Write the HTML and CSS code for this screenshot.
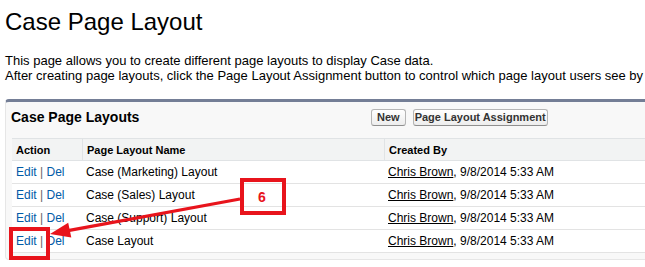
FILE: index.html
```html
<!DOCTYPE html>
<html>
<head>
<meta charset="utf-8">
<title>Case Page Layout</title>
<link rel="stylesheet" href="styles.css">
</head>
<body>
<div class="page">
  <h1 class="title">Case Page Layout</h1>
  <p class="desc">This page allows you to create different page layouts to display Case data.<br>After creating page layouts, click the Page Layout Assignment button to control which page layout users see by</p>
  <div class="panel">
    <div class="panel-head">
      <h2 class="panel-title">Case Page Layouts</h2>
      <div class="buttons">
        <button class="btn btn-new">New</button>
        <button class="btn btn-assign">Page Layout Assignment</button>
      </div>
    </div>
    <table class="list">
      <colgroup><col class="c-action"><col class="c-name"><col class="c-by"></colgroup>
      <thead>
        <tr><th class="first">Action</th><th>Page Layout Name</th><th>Created By</th></tr>
      </thead>
      <tbody>
        <tr><td><a class="act" href="#">Edit</a> <span class="sep">|</span> <a class="act" href="#">Del</a></td><td>Case (Marketing) Layout</td><td><a class="user" href="#">Chris Brown</a>, 9/8/2014 5:33 AM</td></tr>
        <tr><td><a class="act" href="#">Edit</a> <span class="sep">|</span> <a class="act" href="#">Del</a></td><td>Case (Sales) Layout</td><td><a class="user" href="#">Chris Brown</a>, 9/8/2014 5:33 AM</td></tr>
        <tr><td><a class="act" href="#">Edit</a> <span class="sep">|</span> <a class="act" href="#">Del</a></td><td>Case (Support) Layout</td><td><a class="user" href="#">Chris Brown</a>, 9/8/2014 5:33 AM</td></tr>
        <tr><td><a class="act" href="#">Edit</a> <span class="sep">|</span> <a class="act" href="#">Del</a></td><td>Case Layout</td><td><a class="user" href="#">Chris Brown</a>, 9/8/2014 5:33 AM</td></tr>
      </tbody>
    </table>
  </div>
</div>
<svg class="annot" width="645" height="267" viewBox="0 0 645 267" xmlns="http://www.w3.org/2000/svg">
  <line x1="240" y1="199" x2="68" y2="230.6" stroke="#e8141c" stroke-width="3.2"/>
  <polygon points="50,234 71.3,237.6 68.2,222.8" fill="#e8141c"/>
  <rect x="242" y="180" width="42" height="33" fill="none" stroke="#e8141c" stroke-width="4"/>
  <text x="262" y="202" text-anchor="middle" class="annot-num">6</text>
  <rect x="11" y="229" width="37" height="29" fill="none" stroke="#e8141c" stroke-width="4"/>
</svg>
</body>
</html>
```

FILE: styles.css
```css
html, body {
  margin: 0;
  padding: 0;
  overflow: hidden;
  background: #fff;
}
body {
  font-family: "Liberation Sans", Arial, sans-serif;
  color: #000;
  position: relative;
}
.page {
  width: 780px;
  padding: 8px 0 0 5px;
}
.title {
  margin: 0;
  font-size: 24px;
  line-height: 28px;
  font-weight: normal;
}
.desc {
  margin: 17px 0 0 0;
  font-size: 13px;
  line-height: 15px;
  white-space: nowrap;
}
.panel {
  margin-top: 16px;
  background: #f8f8f8;
  border: 1px solid #e6e6e6;
  border-top: 3px solid #747e96;
  border-radius: 4px;
  padding: 0 0 6px 6px;
}
.panel-head {
  display: grid;
  grid-template-columns: 365px auto;
  align-items: center;
  height: 30px;
  margin-left: -6px;
}
.panel-title {
  margin: 0;
  padding-left: 5px;
  font-size: 14px;
  line-height: 20px;
  font-weight: bold;
}
.buttons {
  display: flex;
  gap: 7px;
}
.btn {
  font-family: "Liberation Sans", Arial, sans-serif;
  font-size: 11px;
  font-weight: bold;
  line-height: 13px;
  color: #333;
  height: 17px;
  padding: 1px 2px;
  border: 1px solid #b5b5b5;
  border-bottom-color: #8f8f8f;
  border-radius: 3px;
  background: linear-gradient(#ffffff, #ededed);
  margin: 0;
}
.btn-new { padding: 1px 5px; }
.btn-assign { padding: 1px 1px; }
.list {
  margin-top: 6px;
  width: 760px;
  border-collapse: separate;
  border-spacing: 0;
  table-layout: fixed;
  background: #fff;
  font-size: 12px;
}
.c-action { width: 70px; }
.c-name { width: 302px; }
.list th, .list td {
  box-sizing: border-box;
  text-align: left;
  padding-left: 4px;
  white-space: nowrap;
}
.list th {
  background: #f2f3f3;
  font-size: 11px;
  font-weight: bold;
  line-height: 13px;
  padding-top: 5px;
  padding-bottom: 3px;
  border-top: 1px solid #e0e3e5;
  border-bottom: 1px solid #e0e3e5;
  border-left: 1px solid #e0e3e5;
}
.list th.first { border-left: 0; }
.list td {
  line-height: 14px;
  padding-top: 4px;
  padding-bottom: 4px;
  border-bottom: 1px solid #e3e3e3;
}
.act {
  color: #015ba7;
  text-decoration: none;
}
.sep { color: #666; }
.user {
  color: #000;
  text-decoration: underline;
}
.annot {
  position: absolute;
  left: 0;
  top: 0;
  pointer-events: none;
}
.annot-num {
  font-family: "Liberation Sans", Arial, sans-serif;
  font-size: 14px;
  font-weight: bold;
  fill: #e8141c;
}
```
